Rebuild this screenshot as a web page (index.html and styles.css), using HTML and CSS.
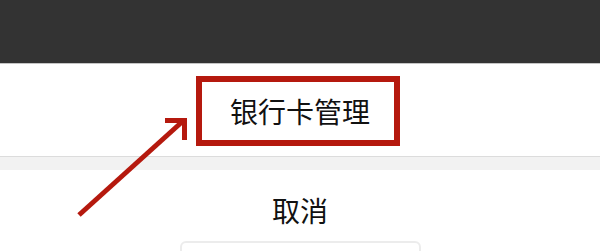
FILE: index.html
```html
<!DOCTYPE html>
<html lang="zh-CN">
<head>
<meta charset="utf-8">
<title>银行卡管理</title>
<link rel="stylesheet" href="styles.css">
</head>
<body>
<div class="page">
  <div class="topbar"></div>
  <div class="menu-row">
    <span class="highlight">银行卡管理</span>
  </div>
  <div class="gap-band"></div>
  <div class="cancel-row">取消</div>
  <div class="pill"></div>
  <svg class="arrow" width="600" height="251" viewBox="0 0 600 251" aria-hidden="true">
    <g stroke="#b5190e" stroke-width="5" fill="none" stroke-linecap="butt">
      <line x1="79" y1="215" x2="183" y2="121"/>
      <polyline points="165,120.5 184.5,120.5 184.5,140" stroke-linejoin="miter"/>
    </g>
  </svg>
</div>
</body>
</html>
```

FILE: styles.css
```css
html, body {
  margin: 0;
  padding: 0;
  background: #ffffff;
}
.page {
  position: relative;
  width: 600px;
  height: 251px;
  overflow: hidden;
  font-family: "Noto Sans CJK SC", "Noto Sans", sans-serif;
  color: #111111;
}
.topbar {
  height: 63px;
  background: #333333;
  border-bottom: 1px solid #c4c4c4;
}
.menu-row {
  height: 92px;
  display: flex;
  align-items: center;
  justify-content: center;
  border-bottom: 1px solid #dcdcdc;
}
.highlight {
  box-sizing: border-box;
  width: 204px;
  height: 70px;
  margin-right: 4px;
  margin-top: 1px;
  border: 6px solid #b5190e;
  display: flex;
  align-items: center;
  justify-content: center;
  font-size: 28px;
  line-height: 1;
  padding-left: 4px;
}
.gap-band {
  height: 13px;
  background: #f2f2f2;
}
.cancel-row {
  box-sizing: border-box;
  height: 71px;
  padding-top: 8px;
  display: flex;
  align-items: center;
  justify-content: center;
  font-size: 28px;
  line-height: 1;
}
.pill {
  width: 241px;
  height: 20px;
  margin-left: 180px;
  box-sizing: border-box;
  border: 2px solid #ececec;
  border-radius: 6px;
}
.arrow {
  position: absolute;
  left: 0;
  top: 0;
}
```
